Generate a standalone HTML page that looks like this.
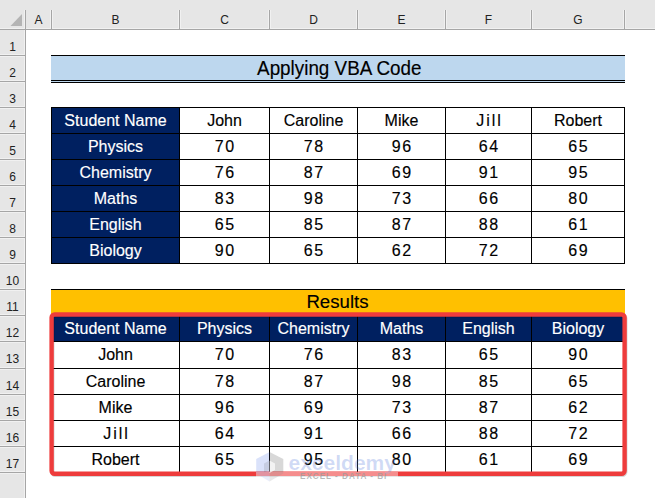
<!DOCTYPE html>
<html><head><meta charset="utf-8"><style>
html,body{margin:0;padding:0;}
body{width:655px;height:498px;position:relative;overflow:hidden;background:#fff;font-family:"Liberation Sans",sans-serif;}
body>div{position:absolute;}
.t{display:flex;align-items:center;justify-content:center;white-space:nowrap;line-height:1;}
</style></head><body>
<div style="left:0px;top:0px;width:655px;height:29px;background:#e6e6e6;"></div>
<div style="left:0px;top:0px;width:25px;height:498px;background:#e6e6e6;"></div>
<div style="left:0px;top:28px;width:655px;height:1px;background:#f1f1f1;"></div>
<div style="left:24px;top:10px;width:1px;height:488px;background:#f1f1f1;"></div>
<div style="left:50px;top:10px;width:3px;height:18px;background:#f1f1f1;"></div>
<div style="left:178px;top:10px;width:3px;height:18px;background:#f1f1f1;"></div>
<div style="left:268px;top:10px;width:3px;height:18px;background:#f1f1f1;"></div>
<div style="left:356px;top:10px;width:3px;height:18px;background:#f1f1f1;"></div>
<div style="left:444px;top:10px;width:3px;height:18px;background:#f1f1f1;"></div>
<div style="left:530px;top:10px;width:3px;height:18px;background:#f1f1f1;"></div>
<div style="left:623px;top:10px;width:3px;height:18px;background:#f1f1f1;"></div>
<div style="left:0px;top:54px;width:24px;height:3px;background:#f1f1f1;"></div>
<div style="left:0px;top:80px;width:24px;height:3px;background:#f1f1f1;"></div>
<div style="left:0px;top:106px;width:24px;height:3px;background:#f1f1f1;"></div>
<div style="left:0px;top:132px;width:24px;height:3px;background:#f1f1f1;"></div>
<div style="left:0px;top:158px;width:24px;height:3px;background:#f1f1f1;"></div>
<div style="left:0px;top:184px;width:24px;height:3px;background:#f1f1f1;"></div>
<div style="left:0px;top:210px;width:24px;height:3px;background:#f1f1f1;"></div>
<div style="left:0px;top:236px;width:24px;height:3px;background:#f1f1f1;"></div>
<div style="left:0px;top:262px;width:24px;height:3px;background:#f1f1f1;"></div>
<div style="left:0px;top:288px;width:24px;height:3px;background:#f1f1f1;"></div>
<div style="left:0px;top:314px;width:24px;height:3px;background:#f1f1f1;"></div>
<div style="left:0px;top:340px;width:24px;height:3px;background:#f1f1f1;"></div>
<div style="left:0px;top:367px;width:24px;height:3px;background:#f1f1f1;"></div>
<div style="left:0px;top:393px;width:24px;height:3px;background:#f1f1f1;"></div>
<div style="left:0px;top:419px;width:24px;height:3px;background:#f1f1f1;"></div>
<div style="left:0px;top:445px;width:24px;height:3px;background:#f1f1f1;"></div>
<div style="left:0px;top:471px;width:24px;height:3px;background:#f1f1f1;"></div>
<div style="left:0px;top:29px;width:655px;height:1px;background:#a6a6a6;"></div>
<div style="left:25px;top:10px;width:1px;height:488px;background:#a6a6a6;"></div>
<div style="left:51px;top:10px;width:1px;height:19px;background:#a6a6a6;"></div>
<div style="left:179px;top:10px;width:1px;height:19px;background:#a6a6a6;"></div>
<div style="left:269px;top:10px;width:1px;height:19px;background:#a6a6a6;"></div>
<div style="left:357px;top:10px;width:1px;height:19px;background:#a6a6a6;"></div>
<div style="left:445px;top:10px;width:1px;height:19px;background:#a6a6a6;"></div>
<div style="left:531px;top:10px;width:1px;height:19px;background:#a6a6a6;"></div>
<div style="left:624px;top:10px;width:1px;height:19px;background:#a6a6a6;"></div>
<div style="left:0px;top:55px;width:25px;height:1px;background:#a6a6a6;"></div>
<div style="left:0px;top:81px;width:25px;height:1px;background:#a6a6a6;"></div>
<div style="left:0px;top:107px;width:25px;height:1px;background:#a6a6a6;"></div>
<div style="left:0px;top:133px;width:25px;height:1px;background:#a6a6a6;"></div>
<div style="left:0px;top:159px;width:25px;height:1px;background:#a6a6a6;"></div>
<div style="left:0px;top:185px;width:25px;height:1px;background:#a6a6a6;"></div>
<div style="left:0px;top:211px;width:25px;height:1px;background:#a6a6a6;"></div>
<div style="left:0px;top:237px;width:25px;height:1px;background:#a6a6a6;"></div>
<div style="left:0px;top:263px;width:25px;height:1px;background:#a6a6a6;"></div>
<div style="left:0px;top:289px;width:25px;height:1px;background:#a6a6a6;"></div>
<div style="left:0px;top:315px;width:25px;height:1px;background:#a6a6a6;"></div>
<div style="left:0px;top:341px;width:25px;height:1px;background:#a6a6a6;"></div>
<div style="left:0px;top:368px;width:25px;height:1px;background:#a6a6a6;"></div>
<div style="left:0px;top:394px;width:25px;height:1px;background:#a6a6a6;"></div>
<div style="left:0px;top:420px;width:25px;height:1px;background:#a6a6a6;"></div>
<div style="left:0px;top:446px;width:25px;height:1px;background:#a6a6a6;"></div>
<div style="left:0px;top:472px;width:25px;height:1px;background:#a6a6a6;"></div>
<svg style="position:absolute;left:0;top:0" width="25" height="29"><polygon points="10.5,26 22,26 22,14" fill="#b4b4b4"/></svg>
<div class="t" style="left:26px;top:10px;width:25px;height:19px;color:#222;font-size:12px;">A</div>
<div class="t" style="left:52px;top:10px;width:127px;height:19px;color:#222;font-size:12px;">B</div>
<div class="t" style="left:180px;top:10px;width:89px;height:19px;color:#222;font-size:12px;">C</div>
<div class="t" style="left:270px;top:10px;width:87px;height:19px;color:#222;font-size:12px;">D</div>
<div class="t" style="left:358px;top:10px;width:87px;height:19px;color:#222;font-size:12px;">E</div>
<div class="t" style="left:446px;top:10px;width:85px;height:19px;color:#222;font-size:12px;">F</div>
<div class="t" style="left:532px;top:10px;width:92px;height:19px;color:#222;font-size:12px;">G</div>
<div class="t" style="left:0px;top:34px;width:25px;height:25px;color:#222;font-size:12px;">1</div>
<div class="t" style="left:0px;top:60px;width:25px;height:25px;color:#222;font-size:12px;">2</div>
<div class="t" style="left:0px;top:86px;width:25px;height:25px;color:#222;font-size:12px;">3</div>
<div class="t" style="left:0px;top:112px;width:25px;height:25px;color:#222;font-size:12px;">4</div>
<div class="t" style="left:0px;top:138px;width:25px;height:25px;color:#222;font-size:12px;">5</div>
<div class="t" style="left:0px;top:164px;width:25px;height:25px;color:#222;font-size:12px;">6</div>
<div class="t" style="left:0px;top:190px;width:25px;height:25px;color:#222;font-size:12px;">7</div>
<div class="t" style="left:0px;top:216px;width:25px;height:25px;color:#222;font-size:12px;">8</div>
<div class="t" style="left:0px;top:242px;width:25px;height:25px;color:#222;font-size:12px;">9</div>
<div class="t" style="left:0px;top:268px;width:25px;height:25px;color:#222;font-size:12px;">10</div>
<div class="t" style="left:0px;top:294px;width:25px;height:25px;color:#222;font-size:12px;">11</div>
<div class="t" style="left:0px;top:320px;width:25px;height:25px;color:#222;font-size:12px;">12</div>
<div class="t" style="left:0px;top:346px;width:25px;height:26px;color:#222;font-size:12px;">13</div>
<div class="t" style="left:0px;top:373px;width:25px;height:25px;color:#222;font-size:12px;">14</div>
<div class="t" style="left:0px;top:399px;width:25px;height:25px;color:#222;font-size:12px;">15</div>
<div class="t" style="left:0px;top:425px;width:25px;height:25px;color:#222;font-size:12px;">16</div>
<div class="t" style="left:0px;top:451px;width:25px;height:25px;color:#222;font-size:12px;">17</div>
<div style="left:51px;top:55px;width:574px;height:26px;background:#bdd7ee;"></div>
<div style="left:51px;top:55px;width:574px;height:1px;background:#000;"></div>
<div style="left:51px;top:80px;width:574px;height:3px;background:#bdd7ee;"></div>
<div style="left:51px;top:80px;width:574px;height:1px;background:#000;"></div>
<div style="left:51px;top:82px;width:574px;height:1px;background:#000;"></div>
<div class="t" style="left:51px;top:56px;width:573px;height:24px;color:#000;font-size:20px;-webkit-text-stroke:0.15px currentColor;"><span style="display:inline-block;transform:translateX(2px) scaleX(0.942)">Applying VBA Code</span></div>
<div style="left:51px;top:107px;width:128px;height:26px;background:#002060;"></div>
<div class="t" style="left:52px;top:108px;width:127px;height:25px;color:#fff;font-size:16px;-webkit-text-stroke:0.15px currentColor;">Student Name</div>
<div class="t" style="left:180px;top:108px;width:89px;height:25px;color:#000;font-size:16px;-webkit-text-stroke:0.15px currentColor;">John</div>
<div class="t" style="left:270px;top:108px;width:87px;height:25px;color:#000;font-size:16px;-webkit-text-stroke:0.15px currentColor;">Caroline</div>
<div class="t" style="left:358px;top:108px;width:87px;height:25px;color:#000;font-size:16px;-webkit-text-stroke:0.15px currentColor;">Mike</div>
<div class="t" style="left:446px;top:108px;width:85px;height:25px;color:#000;font-size:16px;-webkit-text-stroke:0.15px currentColor;letter-spacing:2px;padding-left:2px;box-sizing:border-box;">Jill</div>
<div class="t" style="left:532px;top:108px;width:92px;height:25px;color:#000;font-size:16px;-webkit-text-stroke:0.15px currentColor;">Robert</div>
<div style="left:51px;top:133px;width:128px;height:26px;background:#002060;"></div>
<div class="t" style="left:52px;top:134px;width:127px;height:25px;color:#fff;font-size:16px;-webkit-text-stroke:0.15px currentColor;">Physics</div>
<div class="t" style="left:180px;top:134px;width:89px;height:25px;color:#000;font-size:16px;-webkit-text-stroke:0.15px currentColor;letter-spacing:1.5px;padding-left:1.5px;box-sizing:border-box;">70</div>
<div class="t" style="left:270px;top:134px;width:87px;height:25px;color:#000;font-size:16px;-webkit-text-stroke:0.15px currentColor;letter-spacing:1.5px;padding-left:1.5px;box-sizing:border-box;">78</div>
<div class="t" style="left:358px;top:134px;width:87px;height:25px;color:#000;font-size:16px;-webkit-text-stroke:0.15px currentColor;letter-spacing:1.5px;padding-left:1.5px;box-sizing:border-box;">96</div>
<div class="t" style="left:446px;top:134px;width:85px;height:25px;color:#000;font-size:16px;-webkit-text-stroke:0.15px currentColor;letter-spacing:1.5px;padding-left:1.5px;box-sizing:border-box;">64</div>
<div class="t" style="left:532px;top:134px;width:92px;height:25px;color:#000;font-size:16px;-webkit-text-stroke:0.15px currentColor;letter-spacing:1.5px;padding-left:1.5px;box-sizing:border-box;">65</div>
<div style="left:51px;top:159px;width:128px;height:26px;background:#002060;"></div>
<div class="t" style="left:52px;top:160px;width:127px;height:25px;color:#fff;font-size:16px;-webkit-text-stroke:0.15px currentColor;">Chemistry</div>
<div class="t" style="left:180px;top:160px;width:89px;height:25px;color:#000;font-size:16px;-webkit-text-stroke:0.15px currentColor;letter-spacing:1.5px;padding-left:1.5px;box-sizing:border-box;">76</div>
<div class="t" style="left:270px;top:160px;width:87px;height:25px;color:#000;font-size:16px;-webkit-text-stroke:0.15px currentColor;letter-spacing:1.5px;padding-left:1.5px;box-sizing:border-box;">87</div>
<div class="t" style="left:358px;top:160px;width:87px;height:25px;color:#000;font-size:16px;-webkit-text-stroke:0.15px currentColor;letter-spacing:1.5px;padding-left:1.5px;box-sizing:border-box;">69</div>
<div class="t" style="left:446px;top:160px;width:85px;height:25px;color:#000;font-size:16px;-webkit-text-stroke:0.15px currentColor;letter-spacing:1.5px;padding-left:1.5px;box-sizing:border-box;">91</div>
<div class="t" style="left:532px;top:160px;width:92px;height:25px;color:#000;font-size:16px;-webkit-text-stroke:0.15px currentColor;letter-spacing:1.5px;padding-left:1.5px;box-sizing:border-box;">95</div>
<div style="left:51px;top:185px;width:128px;height:26px;background:#002060;"></div>
<div class="t" style="left:52px;top:186px;width:127px;height:25px;color:#fff;font-size:16px;-webkit-text-stroke:0.15px currentColor;">Maths</div>
<div class="t" style="left:180px;top:186px;width:89px;height:25px;color:#000;font-size:16px;-webkit-text-stroke:0.15px currentColor;letter-spacing:1.5px;padding-left:1.5px;box-sizing:border-box;">83</div>
<div class="t" style="left:270px;top:186px;width:87px;height:25px;color:#000;font-size:16px;-webkit-text-stroke:0.15px currentColor;letter-spacing:1.5px;padding-left:1.5px;box-sizing:border-box;">98</div>
<div class="t" style="left:358px;top:186px;width:87px;height:25px;color:#000;font-size:16px;-webkit-text-stroke:0.15px currentColor;letter-spacing:1.5px;padding-left:1.5px;box-sizing:border-box;">73</div>
<div class="t" style="left:446px;top:186px;width:85px;height:25px;color:#000;font-size:16px;-webkit-text-stroke:0.15px currentColor;letter-spacing:1.5px;padding-left:1.5px;box-sizing:border-box;">66</div>
<div class="t" style="left:532px;top:186px;width:92px;height:25px;color:#000;font-size:16px;-webkit-text-stroke:0.15px currentColor;letter-spacing:1.5px;padding-left:1.5px;box-sizing:border-box;">80</div>
<div style="left:51px;top:211px;width:128px;height:26px;background:#002060;"></div>
<div class="t" style="left:52px;top:212px;width:127px;height:25px;color:#fff;font-size:16px;-webkit-text-stroke:0.15px currentColor;">English</div>
<div class="t" style="left:180px;top:212px;width:89px;height:25px;color:#000;font-size:16px;-webkit-text-stroke:0.15px currentColor;letter-spacing:1.5px;padding-left:1.5px;box-sizing:border-box;">65</div>
<div class="t" style="left:270px;top:212px;width:87px;height:25px;color:#000;font-size:16px;-webkit-text-stroke:0.15px currentColor;letter-spacing:1.5px;padding-left:1.5px;box-sizing:border-box;">85</div>
<div class="t" style="left:358px;top:212px;width:87px;height:25px;color:#000;font-size:16px;-webkit-text-stroke:0.15px currentColor;letter-spacing:1.5px;padding-left:1.5px;box-sizing:border-box;">87</div>
<div class="t" style="left:446px;top:212px;width:85px;height:25px;color:#000;font-size:16px;-webkit-text-stroke:0.15px currentColor;letter-spacing:1.5px;padding-left:1.5px;box-sizing:border-box;">88</div>
<div class="t" style="left:532px;top:212px;width:92px;height:25px;color:#000;font-size:16px;-webkit-text-stroke:0.15px currentColor;letter-spacing:1.5px;padding-left:1.5px;box-sizing:border-box;">61</div>
<div style="left:51px;top:237px;width:128px;height:26px;background:#002060;"></div>
<div class="t" style="left:52px;top:238px;width:127px;height:25px;color:#fff;font-size:16px;-webkit-text-stroke:0.15px currentColor;">Biology</div>
<div class="t" style="left:180px;top:238px;width:89px;height:25px;color:#000;font-size:16px;-webkit-text-stroke:0.15px currentColor;letter-spacing:1.5px;padding-left:1.5px;box-sizing:border-box;">90</div>
<div class="t" style="left:270px;top:238px;width:87px;height:25px;color:#000;font-size:16px;-webkit-text-stroke:0.15px currentColor;letter-spacing:1.5px;padding-left:1.5px;box-sizing:border-box;">65</div>
<div class="t" style="left:358px;top:238px;width:87px;height:25px;color:#000;font-size:16px;-webkit-text-stroke:0.15px currentColor;letter-spacing:1.5px;padding-left:1.5px;box-sizing:border-box;">62</div>
<div class="t" style="left:446px;top:238px;width:85px;height:25px;color:#000;font-size:16px;-webkit-text-stroke:0.15px currentColor;letter-spacing:1.5px;padding-left:1.5px;box-sizing:border-box;">72</div>
<div class="t" style="left:532px;top:238px;width:92px;height:25px;color:#000;font-size:16px;-webkit-text-stroke:0.15px currentColor;letter-spacing:1.5px;padding-left:1.5px;box-sizing:border-box;">69</div>
<div style="left:51px;top:107px;width:574px;height:1px;background:#000;"></div>
<div style="left:51px;top:133px;width:574px;height:1px;background:#000;"></div>
<div style="left:51px;top:159px;width:574px;height:1px;background:#000;"></div>
<div style="left:51px;top:185px;width:574px;height:1px;background:#000;"></div>
<div style="left:51px;top:211px;width:574px;height:1px;background:#000;"></div>
<div style="left:51px;top:237px;width:574px;height:1px;background:#000;"></div>
<div style="left:51px;top:263px;width:574px;height:1px;background:#000;"></div>
<div style="left:51px;top:107px;width:1px;height:157px;background:#000;"></div>
<div style="left:179px;top:107px;width:1px;height:157px;background:#000;"></div>
<div style="left:269px;top:107px;width:1px;height:157px;background:#000;"></div>
<div style="left:357px;top:107px;width:1px;height:157px;background:#000;"></div>
<div style="left:445px;top:107px;width:1px;height:157px;background:#000;"></div>
<div style="left:531px;top:107px;width:1px;height:157px;background:#000;"></div>
<div style="left:624px;top:107px;width:1px;height:157px;background:#000;"></div>
<div style="left:51px;top:289px;width:574px;height:26px;background:#ffc000;"></div>
<div style="left:51px;top:289px;width:574px;height:1px;background:#000;"></div>
<div class="t" style="left:51px;top:290px;width:573px;height:25px;color:#000;font-size:18.67px;-webkit-text-stroke:0.15px currentColor;">Results</div>
<div style="left:51px;top:315px;width:128px;height:26px;background:#002060;"></div>
<div class="t" style="left:52px;top:316px;width:127px;height:25px;color:#fff;font-size:16px;-webkit-text-stroke:0.15px currentColor;">Student Name</div>
<div style="left:179px;top:315px;width:90px;height:26px;background:#002060;"></div>
<div class="t" style="left:180px;top:316px;width:89px;height:25px;color:#fff;font-size:16px;-webkit-text-stroke:0.15px currentColor;">Physics</div>
<div style="left:269px;top:315px;width:88px;height:26px;background:#002060;"></div>
<div class="t" style="left:270px;top:316px;width:87px;height:25px;color:#fff;font-size:16px;-webkit-text-stroke:0.15px currentColor;">Chemistry</div>
<div style="left:357px;top:315px;width:88px;height:26px;background:#002060;"></div>
<div class="t" style="left:358px;top:316px;width:87px;height:25px;color:#fff;font-size:16px;-webkit-text-stroke:0.15px currentColor;">Maths</div>
<div style="left:445px;top:315px;width:86px;height:26px;background:#002060;"></div>
<div class="t" style="left:446px;top:316px;width:85px;height:25px;color:#fff;font-size:16px;-webkit-text-stroke:0.15px currentColor;">English</div>
<div style="left:531px;top:315px;width:93px;height:26px;background:#002060;"></div>
<div class="t" style="left:532px;top:316px;width:92px;height:25px;color:#fff;font-size:16px;-webkit-text-stroke:0.15px currentColor;">Biology</div>
<div class="t" style="left:52px;top:342px;width:127px;height:26px;color:#000;font-size:16px;-webkit-text-stroke:0.15px currentColor;">John</div>
<div class="t" style="left:180px;top:342px;width:89px;height:26px;color:#000;font-size:16px;-webkit-text-stroke:0.15px currentColor;letter-spacing:1.5px;padding-left:1.5px;box-sizing:border-box;">70</div>
<div class="t" style="left:270px;top:342px;width:87px;height:26px;color:#000;font-size:16px;-webkit-text-stroke:0.15px currentColor;letter-spacing:1.5px;padding-left:1.5px;box-sizing:border-box;">76</div>
<div class="t" style="left:358px;top:342px;width:87px;height:26px;color:#000;font-size:16px;-webkit-text-stroke:0.15px currentColor;letter-spacing:1.5px;padding-left:1.5px;box-sizing:border-box;">83</div>
<div class="t" style="left:446px;top:342px;width:85px;height:26px;color:#000;font-size:16px;-webkit-text-stroke:0.15px currentColor;letter-spacing:1.5px;padding-left:1.5px;box-sizing:border-box;">65</div>
<div class="t" style="left:532px;top:342px;width:92px;height:26px;color:#000;font-size:16px;-webkit-text-stroke:0.15px currentColor;letter-spacing:1.5px;padding-left:1.5px;box-sizing:border-box;">90</div>
<div class="t" style="left:52px;top:369px;width:127px;height:25px;color:#000;font-size:16px;-webkit-text-stroke:0.15px currentColor;">Caroline</div>
<div class="t" style="left:180px;top:369px;width:89px;height:25px;color:#000;font-size:16px;-webkit-text-stroke:0.15px currentColor;letter-spacing:1.5px;padding-left:1.5px;box-sizing:border-box;">78</div>
<div class="t" style="left:270px;top:369px;width:87px;height:25px;color:#000;font-size:16px;-webkit-text-stroke:0.15px currentColor;letter-spacing:1.5px;padding-left:1.5px;box-sizing:border-box;">87</div>
<div class="t" style="left:358px;top:369px;width:87px;height:25px;color:#000;font-size:16px;-webkit-text-stroke:0.15px currentColor;letter-spacing:1.5px;padding-left:1.5px;box-sizing:border-box;">98</div>
<div class="t" style="left:446px;top:369px;width:85px;height:25px;color:#000;font-size:16px;-webkit-text-stroke:0.15px currentColor;letter-spacing:1.5px;padding-left:1.5px;box-sizing:border-box;">85</div>
<div class="t" style="left:532px;top:369px;width:92px;height:25px;color:#000;font-size:16px;-webkit-text-stroke:0.15px currentColor;letter-spacing:1.5px;padding-left:1.5px;box-sizing:border-box;">65</div>
<div class="t" style="left:52px;top:395px;width:127px;height:25px;color:#000;font-size:16px;-webkit-text-stroke:0.15px currentColor;">Mike</div>
<div class="t" style="left:180px;top:395px;width:89px;height:25px;color:#000;font-size:16px;-webkit-text-stroke:0.15px currentColor;letter-spacing:1.5px;padding-left:1.5px;box-sizing:border-box;">96</div>
<div class="t" style="left:270px;top:395px;width:87px;height:25px;color:#000;font-size:16px;-webkit-text-stroke:0.15px currentColor;letter-spacing:1.5px;padding-left:1.5px;box-sizing:border-box;">69</div>
<div class="t" style="left:358px;top:395px;width:87px;height:25px;color:#000;font-size:16px;-webkit-text-stroke:0.15px currentColor;letter-spacing:1.5px;padding-left:1.5px;box-sizing:border-box;">73</div>
<div class="t" style="left:446px;top:395px;width:85px;height:25px;color:#000;font-size:16px;-webkit-text-stroke:0.15px currentColor;letter-spacing:1.5px;padding-left:1.5px;box-sizing:border-box;">87</div>
<div class="t" style="left:532px;top:395px;width:92px;height:25px;color:#000;font-size:16px;-webkit-text-stroke:0.15px currentColor;letter-spacing:1.5px;padding-left:1.5px;box-sizing:border-box;">62</div>
<div class="t" style="left:52px;top:421px;width:127px;height:25px;color:#000;font-size:16px;-webkit-text-stroke:0.15px currentColor;letter-spacing:2px;padding-left:2px;box-sizing:border-box;">Jill</div>
<div class="t" style="left:180px;top:421px;width:89px;height:25px;color:#000;font-size:16px;-webkit-text-stroke:0.15px currentColor;letter-spacing:1.5px;padding-left:1.5px;box-sizing:border-box;">64</div>
<div class="t" style="left:270px;top:421px;width:87px;height:25px;color:#000;font-size:16px;-webkit-text-stroke:0.15px currentColor;letter-spacing:1.5px;padding-left:1.5px;box-sizing:border-box;">91</div>
<div class="t" style="left:358px;top:421px;width:87px;height:25px;color:#000;font-size:16px;-webkit-text-stroke:0.15px currentColor;letter-spacing:1.5px;padding-left:1.5px;box-sizing:border-box;">66</div>
<div class="t" style="left:446px;top:421px;width:85px;height:25px;color:#000;font-size:16px;-webkit-text-stroke:0.15px currentColor;letter-spacing:1.5px;padding-left:1.5px;box-sizing:border-box;">88</div>
<div class="t" style="left:532px;top:421px;width:92px;height:25px;color:#000;font-size:16px;-webkit-text-stroke:0.15px currentColor;letter-spacing:1.5px;padding-left:1.5px;box-sizing:border-box;">72</div>
<div class="t" style="left:52px;top:447px;width:127px;height:25px;color:#000;font-size:16px;-webkit-text-stroke:0.15px currentColor;">Robert</div>
<div class="t" style="left:180px;top:447px;width:89px;height:25px;color:#000;font-size:16px;-webkit-text-stroke:0.15px currentColor;letter-spacing:1.5px;padding-left:1.5px;box-sizing:border-box;">65</div>
<div class="t" style="left:270px;top:447px;width:87px;height:25px;color:#000;font-size:16px;-webkit-text-stroke:0.15px currentColor;letter-spacing:1.5px;padding-left:1.5px;box-sizing:border-box;">95</div>
<div class="t" style="left:358px;top:447px;width:87px;height:25px;color:#000;font-size:16px;-webkit-text-stroke:0.15px currentColor;letter-spacing:1.5px;padding-left:1.5px;box-sizing:border-box;">80</div>
<div class="t" style="left:446px;top:447px;width:85px;height:25px;color:#000;font-size:16px;-webkit-text-stroke:0.15px currentColor;letter-spacing:1.5px;padding-left:1.5px;box-sizing:border-box;">61</div>
<div class="t" style="left:532px;top:447px;width:92px;height:25px;color:#000;font-size:16px;-webkit-text-stroke:0.15px currentColor;letter-spacing:1.5px;padding-left:1.5px;box-sizing:border-box;">69</div>
<div style="left:51px;top:315px;width:574px;height:1px;background:#000;"></div>
<div style="left:51px;top:341px;width:574px;height:1px;background:#000;"></div>
<div style="left:51px;top:368px;width:574px;height:1px;background:#000;"></div>
<div style="left:51px;top:394px;width:574px;height:1px;background:#000;"></div>
<div style="left:51px;top:420px;width:574px;height:1px;background:#000;"></div>
<div style="left:51px;top:446px;width:574px;height:1px;background:#000;"></div>
<div style="left:51px;top:472px;width:574px;height:1px;background:#000;"></div>
<div style="left:51px;top:315px;width:1px;height:158px;background:#000;"></div>
<div style="left:179px;top:315px;width:1px;height:158px;background:#000;"></div>
<div style="left:269px;top:315px;width:1px;height:158px;background:#000;"></div>
<div style="left:357px;top:315px;width:1px;height:158px;background:#000;"></div>
<div style="left:445px;top:315px;width:1px;height:158px;background:#000;"></div>
<div style="left:531px;top:315px;width:1px;height:158px;background:#000;"></div>
<div style="left:624px;top:315px;width:1px;height:158px;background:#000;"></div>
<svg style="position:absolute;left:0;top:0" width="655" height="498"><rect x="52.3" y="315.4" width="573" height="159.3" rx="3" ry="3" fill="none" stroke="rgba(0,0,0,0.16)" stroke-width="4.4"/><rect x="51.6" y="314.5" width="573" height="159.3" rx="3" ry="3" fill="none" stroke="#ee3c3c" stroke-width="4.4"/></svg>
<svg style="position:absolute;left:254px;top:448px" width="150" height="40" viewBox="0 0 150 40">
<polygon points="15.5,4 15.5,33.6 2.2,25.5 2.2,11" fill="rgb(70,110,230)" fill-opacity="0.2"/>
<polygon points="15.5,4 29.3,11 29.3,25.5 15.5,33.6" fill="rgb(60,60,60)" fill-opacity="0.2"/>
<polygon points="15.5,12.5 15.5,22 10,24.5 10,15.5" fill="rgb(60,60,60)" fill-opacity="0.12"/>
<polygon points="15.5,12.5 21,15.5 21,22 15.5,25" fill="#fff" fill-opacity="0.7"/>
<text x="34.5" y="21.5" font-family="Liberation Sans" font-weight="bold" font-size="21" fill="rgb(90,125,220)" fill-opacity="0.28">exceldemy</text>
<text x="46" y="31" font-family="Liberation Sans" font-weight="bold" font-size="8.2" letter-spacing="0.95" fill="#505050" fill-opacity="0.7">EXCEL - DATA - BI</text>
</svg>
<div style="left:256px;top:472px;width:142px;height:11px;background:rgba(255,255,255,0.42)"></div>
</body></html>
